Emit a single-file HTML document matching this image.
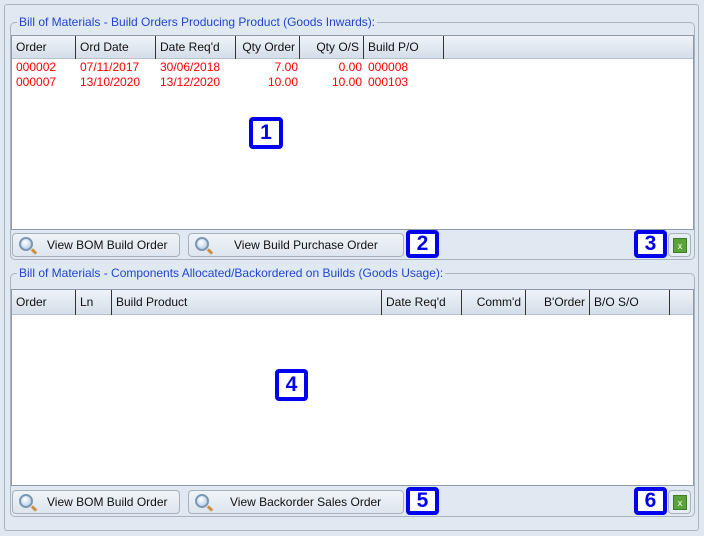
<!DOCTYPE html><html><head><style>
*{box-sizing:border-box;margin:0;padding:0}
body{width:704px;height:536px;background:#dfe7f1;font-family:"Liberation Sans",sans-serif;font-size:12px;position:relative;overflow:hidden}
.abs{position:absolute}
.outer{left:4px;top:4px;width:695px;height:527px;border:1px solid #a9b4c0;border-radius:3px;background:#e0e8f2}
.grp{border:1px solid #a9b4c0;border-radius:5px}
.leg{background:#e0e8f2;color:#2146d0;padding:0 2px;font-size:12px}
.tbl{background:#fff;border:1px solid #8e9aa8}
.hdr{background:linear-gradient(#eef3f8,#d4dee9);border-bottom:1px solid #b7c2ce;height:23px}
.hc{position:absolute;top:0;height:23px;line-height:22px;border-right:1px solid #333;padding:0 4px;color:#111}
.r{text-align:right}
.row{position:absolute;color:#f00;height:15px;line-height:15px}
.btn{border:1px solid #a7b1bd;border-radius:4px;background:linear-gradient(#f0f4f8,#dde5ee);height:24px;line-height:22px;color:#111}
.mag{position:absolute;left:6px;top:3px;width:14px;height:14px;border-radius:50%;border:2px solid #7c97b3;background:radial-gradient(circle at 40% 35%,#fff,#a9c6e2)}
.mag:after{content:"";position:absolute;left:10px;top:11px;width:6px;height:3px;background:#c8923a;transform:rotate(45deg)}
.badge{border:4px solid #0000ee;border-radius:4px;background:#fff;color:#0000ee;font-weight:bold;font-size:21px;text-align:center}
.xl{border:1px solid #a7b1bd;border-radius:4px;background:#e6edf4;width:23px;height:24px}
.xl i{position:absolute;left:4px;top:4px;width:14px;height:15px;background:#5aa33a;border:1px solid #3e7d25;color:#fff;font-size:9px;font-style:normal;text-align:center;line-height:14px}
</style></head><body>
<div class="abs outer"></div>
<!-- group 1 -->
<div class="abs grp" style="left:10px;top:22px;width:685px;height:238px"></div>
<div class="abs leg" style="left:17px;top:15px">Bill of Materials - Build Orders Producing Product (Goods Inwards):</div>
<div class="abs tbl" style="left:11px;top:35px;width:683px;height:195px">
<div class="hdr" style="position:relative">
<div class="hc" style="left:0;width:64px">Order</div>
<div class="hc" style="left:64px;width:80px">Ord Date</div>
<div class="hc" style="left:144px;width:80px">Date Req'd</div>
<div class="hc r" style="left:224px;width:64px">Qty Order</div>
<div class="hc r" style="left:288px;width:64px">Qty O/S</div>
<div class="hc" style="left:352px;width:80px">Build P/O</div>
</div>
<div class="row" style="top:24px;left:4px">000002</div><div class="row" style="top:24px;left:68px">07/11/2017</div><div class="row" style="top:24px;left:148px">30/06/2018</div><div class="row r" style="top:24px;left:224px;width:62px">7.00</div><div class="row r" style="top:24px;left:288px;width:62px">0.00</div><div class="row" style="top:24px;left:356px">000008</div>
<div class="row" style="top:39px;left:4px">000007</div><div class="row" style="top:39px;left:68px">13/10/2020</div><div class="row" style="top:39px;left:148px">13/12/2020</div><div class="row r" style="top:39px;left:224px;width:62px">10.00</div><div class="row r" style="top:39px;left:288px;width:62px">10.00</div><div class="row" style="top:39px;left:356px">000103</div>
</div>
<div class="abs btn" style="left:12px;top:233px;width:168px"><span class="mag"></span><span style="position:absolute;left:34px">View BOM Build Order</span></div>
<div class="abs btn" style="left:188px;top:233px;width:216px"><span class="mag"></span><span style="position:absolute;left:45px">View Build Purchase Order</span></div>
<div class="abs xl" style="left:668px;top:233px"><i>x</i></div>
<!-- group 2 -->
<div class="abs grp" style="left:10px;top:273px;width:685px;height:244px"></div>
<div class="abs leg" style="left:17px;top:266px">Bill of Materials - Components Allocated/Backordered on Builds (Goods Usage):</div>
<div class="abs tbl" style="left:11px;top:289px;width:683px;height:197px">
<div class="hdr" style="position:relative;height:25px">
<div class="hc" style="left:0;width:64px;height:25px;line-height:24px">Order</div>
<div class="hc" style="left:64px;width:36px;height:25px;line-height:24px">Ln</div>
<div class="hc" style="left:100px;width:270px;height:25px;line-height:24px">Build Product</div>
<div class="hc" style="left:370px;width:80px;height:25px;line-height:24px">Date Req'd</div>
<div class="hc r" style="left:450px;width:64px;height:25px;line-height:24px">Comm'd</div>
<div class="hc r" style="left:514px;width:64px;height:25px;line-height:24px">B'Order</div>
<div class="hc" style="left:578px;width:80px;height:25px;line-height:24px">B/O S/O</div>
</div></div>
<div class="abs btn" style="left:12px;top:490px;width:168px"><span class="mag"></span><span style="position:absolute;left:34px">View BOM Build Order</span></div>
<div class="abs btn" style="left:188px;top:490px;width:216px"><span class="mag"></span><span style="position:absolute;left:41px">View Backorder Sales Order</span></div>
<div class="abs xl" style="left:668px;top:490px"><i>x</i></div>
<!-- badges -->
<div class="abs badge" style="left:249px;top:117px;width:34px;height:32px;line-height:24px">1</div>
<div class="abs badge" style="left:406px;top:230px;width:33px;height:28px;line-height:20px">2</div>
<div class="abs badge" style="left:634px;top:230px;width:33px;height:28px;line-height:20px">3</div>
<div class="abs badge" style="left:275px;top:369px;width:33px;height:32px;line-height:24px">4</div>
<div class="abs badge" style="left:406px;top:487px;width:33px;height:28px;line-height:20px">5</div>
<div class="abs badge" style="left:634px;top:487px;width:33px;height:28px;line-height:20px">6</div>
</body></html>
